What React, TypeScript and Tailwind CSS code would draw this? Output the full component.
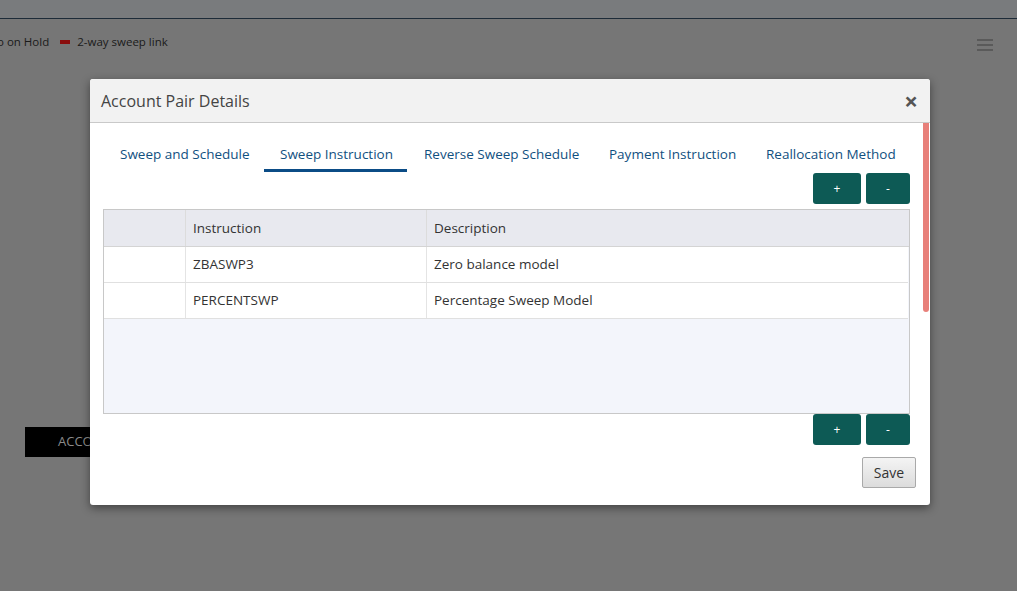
import React from "react";

const tabs = [
  { label: "Sweep and Schedule", w: "w-[159px]" },
  { label: "Sweep Instruction", w: "w-[143px]" },
  { label: "Reverse Sweep Schedule", w: "w-[184px]" },
  { label: "Payment Instruction", w: "w-[156px]" },
  { label: "Reallocation Method", w: "w-[150px]" },
];

const rows = [
  { code: "ZBASWP3", desc: "Zero balance model" },
  { code: "PERCENTSWP", desc: "Percentage Sweep Model" },
];

function PlusMinus() {
  return (
    <div className="flex justify-end gap-[5px]">
      <button className="w-[48px] h-[31px] rounded-[3px] bg-[#0d5a55] text-white text-[12px]">+</button>
      <button className="w-[44px] h-[31px] rounded-[3px] bg-[#0d5a55] text-white text-[12px]">-</button>
    </div>
  );
}

export default function App() {
  return (
    <div
      className="relative w-full h-[591px] overflow-hidden bg-[#767676] text-[#1a1a1a]"
      style={{ fontFamily: '"Open Sans", "Noto Sans", sans-serif' }}
    >
      {/* page underneath the overlay */}
      <div className="h-[19px] bg-[#797b7d] border-b border-[#1d2b38]" />
      <div className="flex items-center justify-between h-[46px] pr-[24px]">
        <div className="flex items-center text-[11.5px] whitespace-nowrap -ml-[3px]">
          <span>o on Hold</span>
          <span className="ml-[11px] w-[10px] h-[4px] bg-[#8a0e0e]" />
          <span className="ml-[7px]">2-way sweep link</span>
        </div>
        <div className="flex flex-col gap-[3px] mt-[5px]">
          <span className="w-[16px] h-[2px] bg-[#5a5a5a]" />
          <span className="w-[16px] h-[2px] bg-[#5a5a5a]" />
          <span className="w-[16px] h-[2px] bg-[#5a5a5a]" />
        </div>
      </div>
      <div className="ml-[25px] mt-[362px] w-[80px] h-[30px] bg-black text-[#8a8a8a] text-[13px] flex items-center pl-[33px] whitespace-nowrap">
        ACCOUNT
      </div>

      {/* modal */}
      <div className="absolute left-[90px] top-[79px] w-[840px] h-[426px] bg-white rounded-[3px] shadow-[0_3px_10px_rgba(0,0,0,0.45)] flex flex-col overflow-hidden">
        <div className="h-[44px] shrink-0 bg-[#f2f2f2] border-b border-[#c9c9c9] flex items-center justify-between pl-[11px] pr-[12px]">
          <span className="text-[16px] text-[#444]">Account Pair Details</span>
          <span className="text-[24px] font-bold text-[#555] leading-none">×</span>
        </div>

        <div className="relative flex-1 pl-[13px] pr-[20px]">
          <div className="absolute right-[1px] top-0 w-[6px] h-[189px] rounded-b-[3px] bg-[#e8807a]" />

          <div className="flex gap-px pl-[1px] pt-[21px] text-[13.5px] text-[#11507f] whitespace-nowrap">
            {tabs.map((t, i) => (
              <div
                key={t.label}
                className={
                  t.w +
                  " px-[16px] h-[28px] border-b-[3px] " +
                  (i === 1 ? "border-[#0b4c86]" : "border-transparent")
                }
              >
                {t.label}
              </div>
            ))}
          </div>

          <div className="mt-px">
            <PlusMinus />
          </div>

          <div className="mt-[5px] h-[205px] border border-[#c8c8c8] bg-[#f3f5fb] text-[13.5px] text-[#333]">
            <div className="grid grid-cols-[81px_241px_1fr] h-[37px] bg-[#e8e9ef] border-b border-[#d4d4d4]">
              <div />
              <div className="flex items-center pl-[7px] border-l border-[#dcdcdc]">Instruction</div>
              <div className="flex items-center pl-[7px] border-l border-[#dcdcdc]">Description</div>
            </div>
            {rows.map((r) => (
              <div
                key={r.code}
                className="grid grid-cols-[81px_241px_1fr] h-[36px] bg-white border-b border-[#e0e0e0] mr-px"
              >
                <div />
                <div className="flex items-center pl-[7px] border-l border-[#e4e4e4]">{r.code}</div>
                <div className="flex items-center pl-[7px] border-l border-[#e4e4e4]">{r.desc}</div>
              </div>
            ))}
          </div>

          <PlusMinus />

          <div className="flex justify-end mt-[12px] -mr-[6px]">
            <button className="w-[54px] h-[31px] border border-[#a9a9a9] rounded-[2px] bg-gradient-to-b from-[#f4f4f4] to-[#dcdcdc] text-[14px] text-[#333]">
              Save
            </button>
          </div>
        </div>
      </div>
    </div>
  );
}
